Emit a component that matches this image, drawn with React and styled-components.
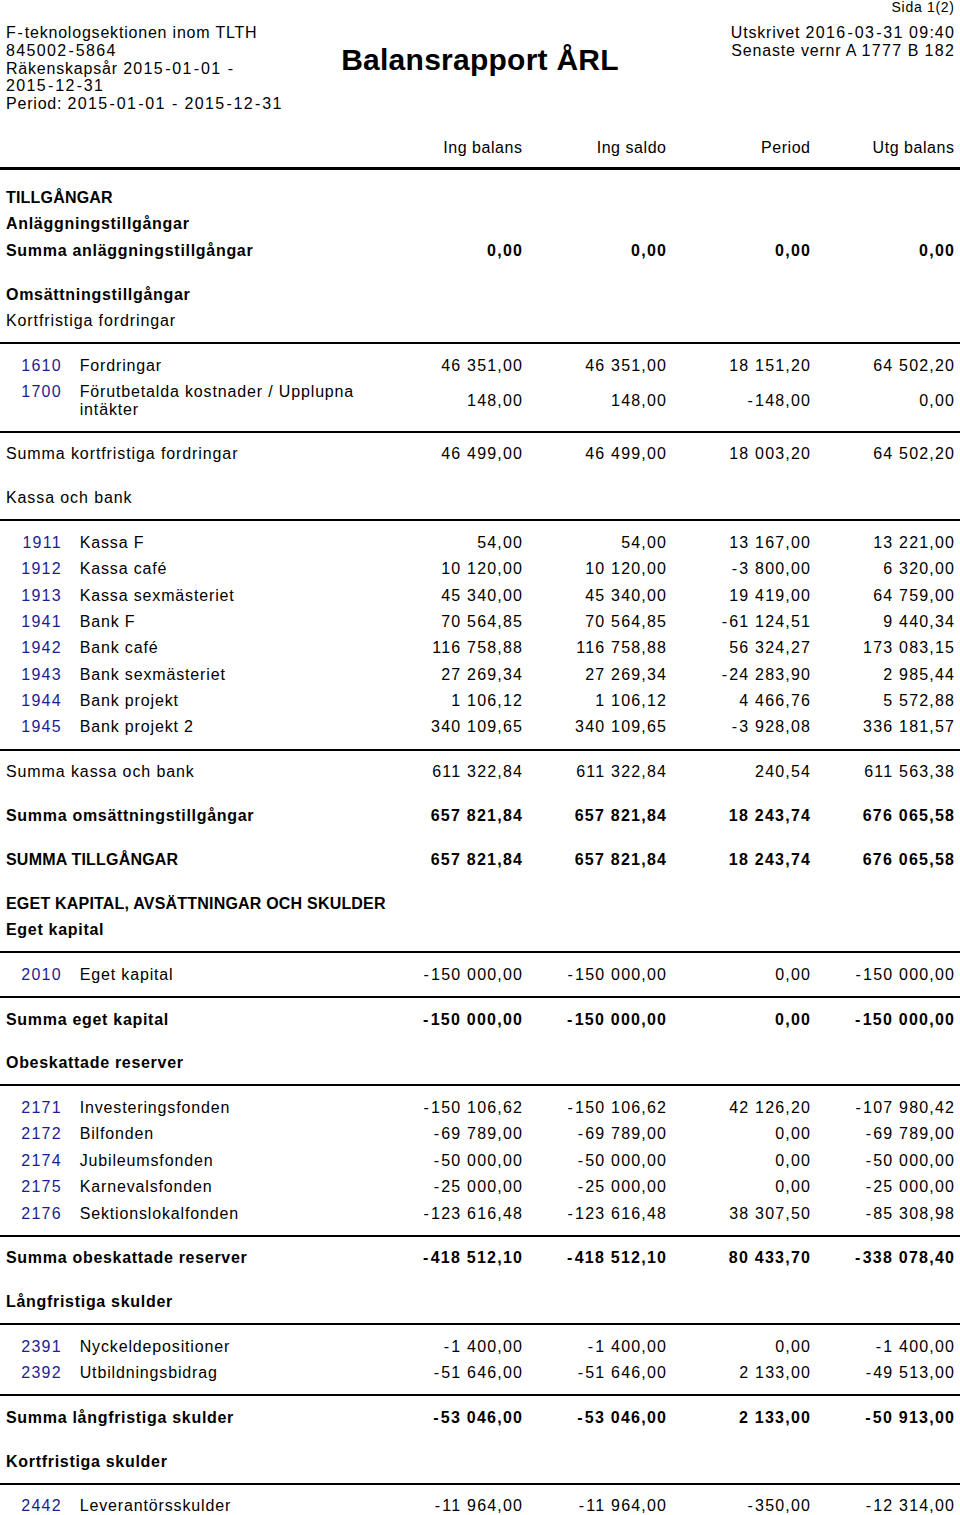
import React from "react";
import styled, { createGlobalStyle, css } from "styled-components";

const GlobalStyle = createGlobalStyle`
  html, body { margin: 0; padding: 0; background: #fff; }
  body { font-family: "Liberation Sans", Arial, Helvetica, sans-serif; color: #000; }
`;

const Page = styled.div`
  width: 960px;
  background: #fff;
`;

const Hyphen = styled.span`
  padding: 0 1px;
`;

const Digits = styled.span`
  letter-spacing: 1.35px;
`;

function Txt({ children, digits }) {
  const parts = String(children).split(/(-|\d+)/).filter((p) => p !== "");
  return parts.map((p, i) => {
    if (p === "-") return <Hyphen key={i}>-</Hyphen>;
    if (digits && /^\d+$/.test(p)) return <Digits key={i}>{p}</Digits>;
    return <React.Fragment key={i}>{p}</React.Fragment>;
  });
}

const PageNo = styled.div`
  font-size: 14px;
  line-height: 14px;
  letter-spacing: 0.7px;
  text-align: right;
  padding: 0 6px 0 0;
  margin-right: -0.7px;
  margin-bottom: 10px;
`;

const Masthead = styled.header`
  display: grid;
  grid-template-columns: 1fr auto 1fr;
  align-items: start;
  padding: 0 6px;
`;

const InfoBlock = styled.div`
  font-size: 16px;
  line-height: 17.75px;
  letter-spacing: 0.8px;
  text-align: ${(p) => (p.$right ? "right" : "left")};
  margin-right: ${(p) => (p.$right ? "-1.3px" : "0")};
`;

const InfoLine = styled.div`
  white-space: nowrap;
`;

const Title = styled.h1`
  margin: 19px 0 0;
  font-size: 30px;
  line-height: 34px;
  font-weight: 700;
  letter-spacing: 0.25px;
  white-space: nowrap;
`;

const gridCols = css`
  display: grid;
  grid-template-columns: 372px repeat(4, 144px);
  align-items: center;
  padding: 4.4px 6px;
  line-height: 17.6px;
  font-size: 16px;
`;

const ColumnHeader = styled.div`
  ${gridCols};
  margin-top: 22px;
  padding-bottom: 10.7px;
  border-bottom: 3px solid #000;
`;

const ColumnTitle = styled.div`
  grid-column: ${(p) => p.$col};
  text-align: right;
  letter-spacing: 0.55px;
  margin-right: -0.55px;
  white-space: nowrap;
`;

const Body = styled.main`
  margin-top: 14.2px;
`;

const Row = styled.div`
  ${gridCols};
  font-weight: ${(p) => (p.$bold ? 700 : 400)};
`;

const Label = styled.div`
  grid-column: ${(p) => (p.$full ? "1 / -1" : "1")};
  align-self: start;
  letter-spacing: ${(p) => (p.$caps ? "0.2px" : p.$bold ? "0.7px" : "0.9px")};
  white-space: nowrap;
`;

const Value = styled.div`
  text-align: right;
  white-space: nowrap;
  letter-spacing: ${(p) => (p.$bold ? "1.25px" : "1.2px")};
  margin-right: ${(p) => (p.$bold ? "-1.25px" : "-1.2px")};
`;

const AccountLabel = styled.div`
  grid-column: 1;
  align-self: start;
  display: flex;
  align-items: flex-start;
`;

const AccountNo = styled.span`
  width: 56px;
  flex: none;
  text-align: right;
  color: #1d1d8f;
  letter-spacing: 1.3px;
  margin-right: 17.7px;
`;

const AccountName = styled.span`
  flex: 1;
  max-width: 290px;
  letter-spacing: 0.85px;
`;

const Group = styled.section`
  margin: 8px 0;
  padding: 8.3px 0;
  border-top: 2px solid #000;
  border-bottom: 2px solid #000;
`;

const Spacer = styled.div`
  height: 17.5px;
`;

const report = [
  { t: "h", label: "TILLGÅNGAR", bold: true, caps: true },
  { t: "h", label: "Anläggningstillgångar", bold: true },
  { t: "s", label: "Summa anläggningstillgångar", bold: true, v: ["0,00", "0,00", "0,00", "0,00"] },
  { t: "sp" },
  { t: "h", label: "Omsättningstillgångar", bold: true },
  { t: "h", label: "Kortfristiga fordringar" },
  {
    t: "g",
    rows: [
      ["1610", "Fordringar", "46 351,00", "46 351,00", "18 151,20", "64 502,20"],
      ["1700", "Förutbetalda kostnader / Upplupna intäkter", "148,00", "148,00", "-148,00", "0,00"],
    ],
  },
  { t: "s", label: "Summa kortfristiga fordringar", v: ["46 499,00", "46 499,00", "18 003,20", "64 502,20"] },
  { t: "sp" },
  { t: "h", label: "Kassa och bank" },
  {
    t: "g",
    rows: [
      ["1911", "Kassa F", "54,00", "54,00", "13 167,00", "13 221,00"],
      ["1912", "Kassa café", "10 120,00", "10 120,00", "-3 800,00", "6 320,00"],
      ["1913", "Kassa sexmästeriet", "45 340,00", "45 340,00", "19 419,00", "64 759,00"],
      ["1941", "Bank F", "70 564,85", "70 564,85", "-61 124,51", "9 440,34"],
      ["1942", "Bank café", "116 758,88", "116 758,88", "56 324,27", "173 083,15"],
      ["1943", "Bank sexmästeriet", "27 269,34", "27 269,34", "-24 283,90", "2 985,44"],
      ["1944", "Bank projekt", "1 106,12", "1 106,12", "4 466,76", "5 572,88"],
      ["1945", "Bank projekt 2", "340 109,65", "340 109,65", "-3 928,08", "336 181,57"],
    ],
  },
  { t: "s", label: "Summa kassa och bank", v: ["611 322,84", "611 322,84", "240,54", "611 563,38"] },
  { t: "sp" },
  { t: "s", label: "Summa omsättningstillgångar", bold: true, v: ["657 821,84", "657 821,84", "18 243,74", "676 065,58"] },
  { t: "sp" },
  { t: "s", label: "SUMMA TILLGÅNGAR", bold: true, caps: true, v: ["657 821,84", "657 821,84", "18 243,74", "676 065,58"] },
  { t: "sp" },
  { t: "h", label: "EGET KAPITAL, AVSÄTTNINGAR OCH SKULDER", bold: true, caps: true },
  { t: "h", label: "Eget kapital", bold: true },
  {
    t: "g",
    rows: [["2010", "Eget kapital", "-150 000,00", "-150 000,00", "0,00", "-150 000,00"]],
  },
  { t: "s", label: "Summa eget kapital", bold: true, v: ["-150 000,00", "-150 000,00", "0,00", "-150 000,00"] },
  { t: "sp" },
  { t: "h", label: "Obeskattade reserver", bold: true },
  {
    t: "g",
    rows: [
      ["2171", "Investeringsfonden", "-150 106,62", "-150 106,62", "42 126,20", "-107 980,42"],
      ["2172", "Bilfonden", "-69 789,00", "-69 789,00", "0,00", "-69 789,00"],
      ["2174", "Jubileumsfonden", "-50 000,00", "-50 000,00", "0,00", "-50 000,00"],
      ["2175", "Karnevalsfonden", "-25 000,00", "-25 000,00", "0,00", "-25 000,00"],
      ["2176", "Sektionslokalfonden", "-123 616,48", "-123 616,48", "38 307,50", "-85 308,98"],
    ],
  },
  { t: "s", label: "Summa obeskattade reserver", bold: true, v: ["-418 512,10", "-418 512,10", "80 433,70", "-338 078,40"] },
  { t: "sp" },
  { t: "h", label: "Långfristiga skulder", bold: true },
  {
    t: "g",
    rows: [
      ["2391", "Nyckeldepositioner", "-1 400,00", "-1 400,00", "0,00", "-1 400,00"],
      ["2392", "Utbildningsbidrag", "-51 646,00", "-51 646,00", "2 133,00", "-49 513,00"],
    ],
  },
  { t: "s", label: "Summa långfristiga skulder", bold: true, v: ["-53 046,00", "-53 046,00", "2 133,00", "-50 913,00"] },
  { t: "sp" },
  { t: "h", label: "Kortfristiga skulder", bold: true },
  {
    t: "g",
    rows: [["2442", "Leverantörsskulder", "-11 964,00", "-11 964,00", "-350,00", "-12 314,00"]],
  },
];

function Block({ item }) {
  if (item.t === "sp") return <Spacer />;
  if (item.t === "h")
    return (
      <Row $bold={item.bold}>
        <Label $full $bold={item.bold} $caps={item.caps}>
          {item.label}
        </Label>
      </Row>
    );
  if (item.t === "s")
    return (
      <Row $bold={item.bold}>
        <Label $bold={item.bold} $caps={item.caps}>
          {item.label}
        </Label>
        {item.v.map((x, i) => (
          <Value key={i} $bold={item.bold}>
            <Txt>{x}</Txt>
          </Value>
        ))}
      </Row>
    );
  return (
    <Group>
      {item.rows.map(([no, name, ...vals]) => (
        <Row key={no}>
          <AccountLabel>
            <AccountNo>{no}</AccountNo>
            <AccountName>{name}</AccountName>
          </AccountLabel>
          {vals.map((x, i) => (
            <Value key={i}>
              <Txt>{x}</Txt>
            </Value>
          ))}
        </Row>
      ))}
    </Group>
  );
}

const leftInfo = [
  "F-teknologsektionen inom TLTH",
  "845002-5864",
  "Räkenskapsår 2015-01-01 -",
  "2015-12-31",
  "Period: 2015-01-01 - 2015-12-31",
];
const rightInfo = ["Utskrivet 2016-03-31 09:40", "Senaste vernr A 1777 B 182"];

export default function App() {
  return (
    <Page>
      <GlobalStyle />
      <PageNo>Sida 1(2)</PageNo>
      <Masthead>
        <InfoBlock>
          {leftInfo.map((l, i) => (
            <InfoLine key={i}>
              <Txt digits>{l}</Txt>
            </InfoLine>
          ))}
        </InfoBlock>
        <Title>Balansrapport ÅRL</Title>
        <InfoBlock $right>
          {rightInfo.map((l, i) => (
            <InfoLine key={i}>
              <Txt digits>{l}</Txt>
            </InfoLine>
          ))}
        </InfoBlock>
      </Masthead>
      <ColumnHeader>
        <ColumnTitle $col={2}>Ing balans</ColumnTitle>
        <ColumnTitle $col={3}>Ing saldo</ColumnTitle>
        <ColumnTitle $col={4}>Period</ColumnTitle>
        <ColumnTitle $col={5}>Utg balans</ColumnTitle>
      </ColumnHeader>
      <Body>
        {report.map((item, i) => (
          <Block key={i} item={item} />
        ))}
      </Body>
    </Page>
  );
}
